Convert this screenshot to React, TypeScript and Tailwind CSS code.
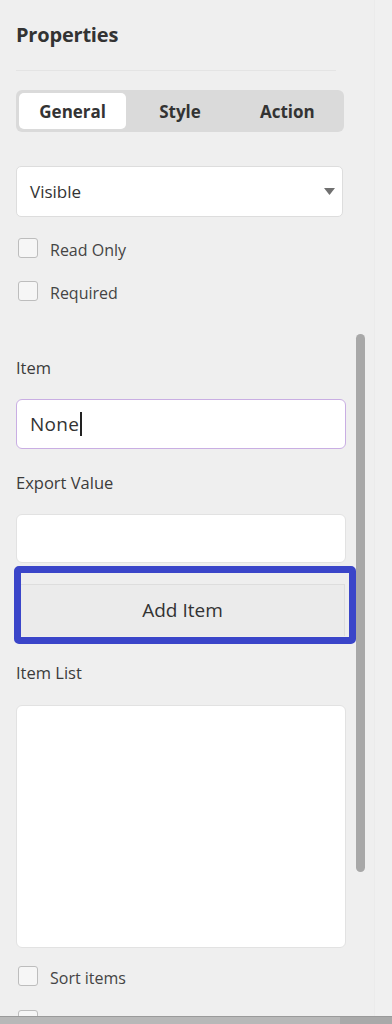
import React from "react";

function Check({ label }: { label?: string }) {
  return (
    <div className="flex h-5 items-center gap-3">
      <span className="h-5 w-5 rounded-[3px] border border-[#bdbdbd] bg-[#f6f6f6]" />
      {label && <span className="pt-[3px] text-[16px] text-[#444]">{label}</span>}
    </div>
  );
}

function Label({ children }: { children: React.ReactNode }) {
  return <div className="h-6 text-[16.5px] leading-6 text-[#3b3b3b]">{children}</div>;
}

export default function App() {
  return (
    <div
      className="relative flex h-[1024px] w-[392px] overflow-hidden bg-[#efefef] text-[#333]"
      style={{ fontFamily: "'Open Sans', 'Noto Sans', sans-serif" }}
    >
      <div className="w-[374px] shrink-0 pl-4">
        <div className="pt-[21px] text-[20px] font-bold leading-7 tracking-[-0.2px] text-[#333]">
          Properties
        </div>
        <div className="mt-[21px] mr-[38px] h-px bg-[#e4e4e4]" />

        <div className="mt-[19px] grid h-[42px] w-[328px] grid-cols-3 rounded-md bg-[#dadada] p-[3px]">
          <div className="flex items-center justify-center rounded-[5px] bg-white pt-px text-[17px] font-bold text-[#333]">
            General
          </div>
          <div className="flex items-center justify-center pt-px text-[17px] font-bold text-[#333]">
            Style
          </div>
          <div className="flex items-center justify-center pt-px text-[17px] font-bold text-[#333]">
            Action
          </div>
        </div>

        <div className="mt-[34px] flex h-[51px] w-[327px] items-center justify-between rounded-[5px] border border-[#dddddd] bg-white pl-[13px] pr-[7px]">
          <span className="text-[17px] text-[#333]">Visible</span>
          <svg width="11" height="7" viewBox="0 0 11 7">
            <path d="M0 0H11L5.5 7Z" fill="#707070" />
          </svg>
        </div>

        <div className="mt-[21px] pl-[2px]">
          <Check label="Read Only" />
        </div>
        <div className="mt-[23px] pl-[2px]">
          <Check label="Required" />
        </div>

        <div className="mt-[55px]">
          <Label>Item</Label>
        </div>
        <div className="mt-[19px] flex h-[50px] w-[330px] items-center rounded-md border border-[#c9aee3] bg-white pl-[13px]">
          <span className="text-[19px] tracking-[0.3px] text-[#333]">None</span>
          <span className="ml-px h-[24px] w-[2px] bg-[#222]" />
        </div>

        <div className="mt-[22px]">
          <Label>Export Value</Label>
        </div>
        <div className="mt-[19px] h-[49px] w-[330px] rounded-md border border-[#e2e2e2] bg-white" />

        <div className="mt-[3px] -ml-[2px] h-[78px] w-[342px] rounded-[5px] border-[7px] border-[#3a45c9] bg-[#eeeeee] pt-[11px]">
          <div className="flex h-[52px] w-[324px] items-center justify-center border-t border-r border-[#dddddd] bg-[#ebebeb] text-[19px] text-[#333]">
            Add Item
          </div>
        </div>

        <div className="mt-[17px]">
          <Label>Item List</Label>
        </div>
        <div className="mt-[20px] h-[243px] w-[330px] rounded-md border border-[#e2e2e2] bg-white" />

        <div className="mt-[18px] pl-[2px]">
          <Check label="Sort items" />
        </div>
        <div className="mt-[24px] pl-[2px]">
          <Check />
        </div>
      </div>

      <div className="flex-1 border-l border-[#ebebeb] bg-[#f0f0f0]" />

      {/* scrollbar thumb */}
      <div className="absolute left-[356px] top-[334px] h-[538px] w-[9px] rounded-full bg-[#a8a8a8]" />

      {/* bottom bar */}
      <div className="absolute bottom-0 left-0 flex h-[8px] w-full border-t border-[#9a9a9a]">
        <div className="w-[340px] bg-[#b8b8b8]" />
        <div className="flex-1 bg-[#a9a9a9]" />
      </div>
    </div>
  );
}
